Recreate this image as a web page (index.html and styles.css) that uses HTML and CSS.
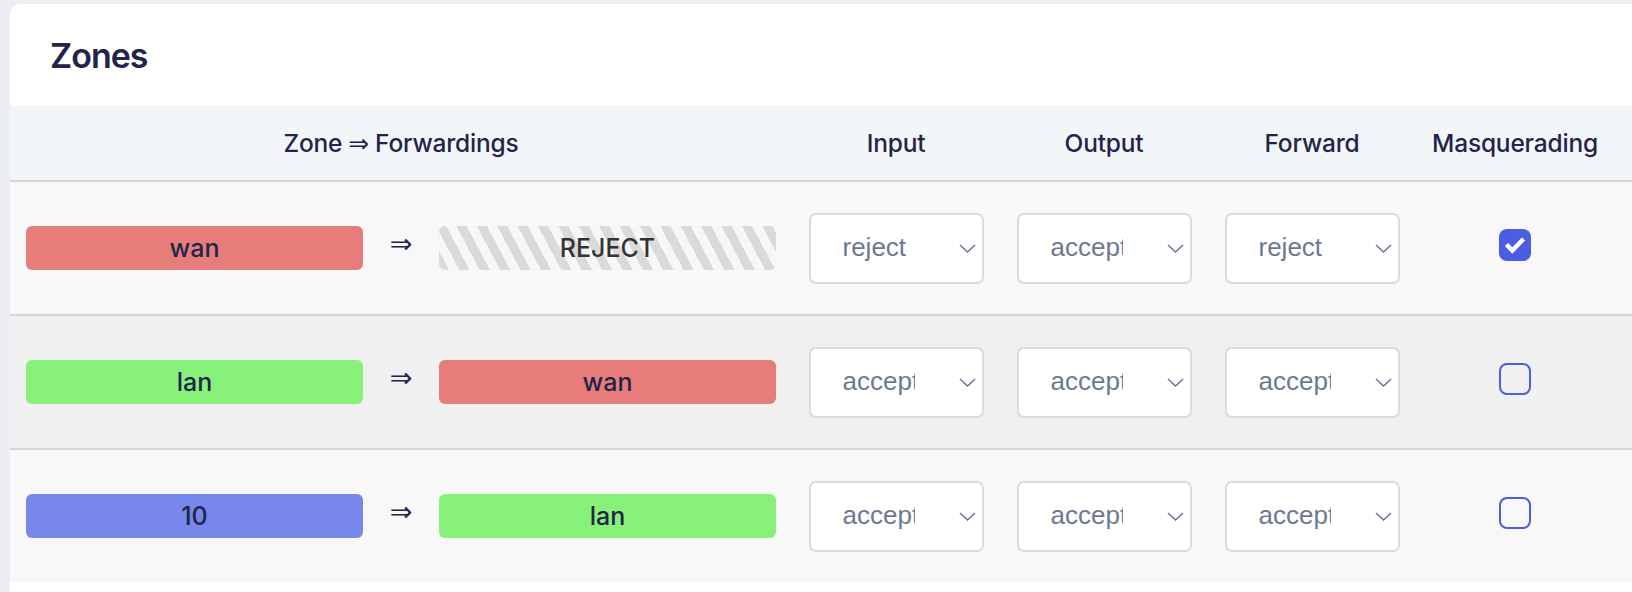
FILE: index.html
```html
<!DOCTYPE html>
<html lang="en">
<head>
<meta charset="utf-8">
<title>Zones</title>
<link rel="stylesheet" href="styles.css">
</head>
<body>
<div class="page">
  <section class="card">
    <h2 class="title">Zones</h2>
    <div class="table">
      <div class="row-grid thead">
        <div class="th">Zone <span class="th-arrow">⇒</span> Forwardings</div>
        <div class="th">Input</div>
        <div class="th">Output</div>
        <div class="th">Forward</div>
        <div class="th">Masquerading</div>
        <div class="th"></div>
      </div>

      <div class="row-grid tr">
        <div class="td zone-cell">
          <span class="badge badge-wan">wan</span>
          <span class="arrow">⇒</span>
          <span class="badge badge-empty">REJECT</span>
        </div>
        <div class="td"><div class="select"><span class="select-value">reject</span><svg class="chev" viewBox="0 0 17 9"><path d="M1 1 L8.5 8 L16 1"/></svg></div></div>
        <div class="td"><div class="select"><span class="select-value">accept</span><svg class="chev" viewBox="0 0 17 9"><path d="M1 1 L8.5 8 L16 1"/></svg></div></div>
        <div class="td"><div class="select"><span class="select-value">reject</span><svg class="chev" viewBox="0 0 17 9"><path d="M1 1 L8.5 8 L16 1"/></svg></div></div>
        <div class="td"><span class="checkbox checked"><svg viewBox="0 0 32 32"><path d="M7.5 15.5 L13.3 21.5 L24.5 10"/></svg></span></div>
        <div class="td"></div>
      </div>

      <div class="row-grid tr tr-alt">
        <div class="td zone-cell">
          <span class="badge badge-lan">lan</span>
          <span class="arrow">⇒</span>
          <span class="badge badge-wan">wan</span>
        </div>
        <div class="td"><div class="select"><span class="select-value">accept</span><svg class="chev" viewBox="0 0 17 9"><path d="M1 1 L8.5 8 L16 1"/></svg></div></div>
        <div class="td"><div class="select"><span class="select-value">accept</span><svg class="chev" viewBox="0 0 17 9"><path d="M1 1 L8.5 8 L16 1"/></svg></div></div>
        <div class="td"><div class="select"><span class="select-value">accept</span><svg class="chev" viewBox="0 0 17 9"><path d="M1 1 L8.5 8 L16 1"/></svg></div></div>
        <div class="td"><span class="checkbox"></span></div>
        <div class="td"></div>
      </div>

      <div class="row-grid tr">
        <div class="td zone-cell">
          <span class="badge badge-ten">10</span>
          <span class="arrow">⇒</span>
          <span class="badge badge-lan">lan</span>
        </div>
        <div class="td"><div class="select"><span class="select-value">accept</span><svg class="chev" viewBox="0 0 17 9"><path d="M1 1 L8.5 8 L16 1"/></svg></div></div>
        <div class="td"><div class="select"><span class="select-value">accept</span><svg class="chev" viewBox="0 0 17 9"><path d="M1 1 L8.5 8 L16 1"/></svg></div></div>
        <div class="td"><div class="select"><span class="select-value">accept</span><svg class="chev" viewBox="0 0 17 9"><path d="M1 1 L8.5 8 L16 1"/></svg></div></div>
        <div class="td"><span class="checkbox"></span></div>
        <div class="td"></div>
      </div>
    </div>
  </section>
</div>
</body>
</html>
```

FILE: styles.css
```css
html, body {
  margin: 0;
  padding: 0;
  overflow: hidden;
  background: #eceef2;
}

body {
  font-family: Inter, "Noto Sans", "DejaVu Sans", sans-serif;
  color: #22244b;
}

.page {
  padding: 4px 0 0 10px;
}

.card {
  width: 1700px;
  background: #ffffff;
  border-radius: 10px 0 0 0;
  overflow: hidden;
  padding-bottom: 20px;
}

.title {
  margin: 0;
  height: 102px;
  display: flex;
  align-items: center;
  padding-left: 40px;
  font-size: 34px;
  font-weight: 600;
  letter-spacing: -1px;
  color: #22244b;
}

.row-grid {
  display: grid;
  grid-template-columns: 782px 208px 208px 208px 198px 1fr;
}

.thead {
  height: 74px;
  background: #f3f6f9;
}

.th {
  display: flex;
  align-items: center;
  justify-content: center;
  font-size: 24.5px;
  font-weight: 500;
  letter-spacing: -0.2px;
  color: #22244b;
}

.th-arrow {
  font-family: "DejaVu Sans", sans-serif;
  font-size: 25px;
  margin: 0 6px;
}

.tr {
  box-sizing: border-box;
  height: 134px;
  border-top: 2px solid #d6d6d8;
  background: #f8f8f8;
}

.tr-alt {
  background: #f0f0f0;
}

.td {
  display: flex;
  align-items: center;
  justify-content: center;
}

.zone-cell {
  justify-content: flex-start;
  padding: 0 16px;
}

.badge {
  flex: 1;
  height: 44px;
  border-radius: 6px;
  display: flex;
  align-items: center;
  justify-content: center;
  font-size: 25px;
  font-weight: 500;
  color: #22244b;
}

.badge-wan {
  background: #e77d7a;
}

.badge-lan {
  background: #88f17a;
}

.badge-ten {
  background: #7887ec;
}

.badge-empty {
  color: #333333;
  font-weight: 500;
  background: repeating-linear-gradient(62deg, #dadada 0 9px, #f7f7f7 9px 18px);
}

.arrow {
  width: 76px;
  flex: none;
  text-align: center;
  font-family: "DejaVu Sans", sans-serif;
  font-size: 27px;
  color: #22244b;
  margin-bottom: 9px;
}

.select {
  box-sizing: border-box;
  width: 175px;
  height: 71px;
  background: #ffffff;
  border: 2px solid #d8dce2;
  border-radius: 7px;
  display: flex;
  align-items: center;
  padding: 0 6px 0 32px;
}

.select-value {
  width: 72px;
  overflow: hidden;
  white-space: nowrap;
  font-family: "Liberation Sans", Arial, sans-serif;
  font-size: 26px;
  color: #6b7a91;
  margin-top: -2px;
}

.chev {
  margin-left: auto;
  width: 17px;
  height: 9px;
  fill: none;
  stroke: #6b7a91;
  stroke-width: 1.6;
}

.checkbox {
  box-sizing: border-box;
  width: 32px;
  height: 32px;
  border-radius: 8px;
  border: 2.5px solid #4a5de3;
  margin-bottom: 6px;
  display: flex;
}

.checkbox.checked {
  border: none;
  background: #4a5de3;
}

.checkbox svg {
  width: 32px;
  height: 32px;
  fill: none;
  stroke: #ffffff;
  stroke-width: 4.6;
  stroke-linejoin: miter;
}
```
